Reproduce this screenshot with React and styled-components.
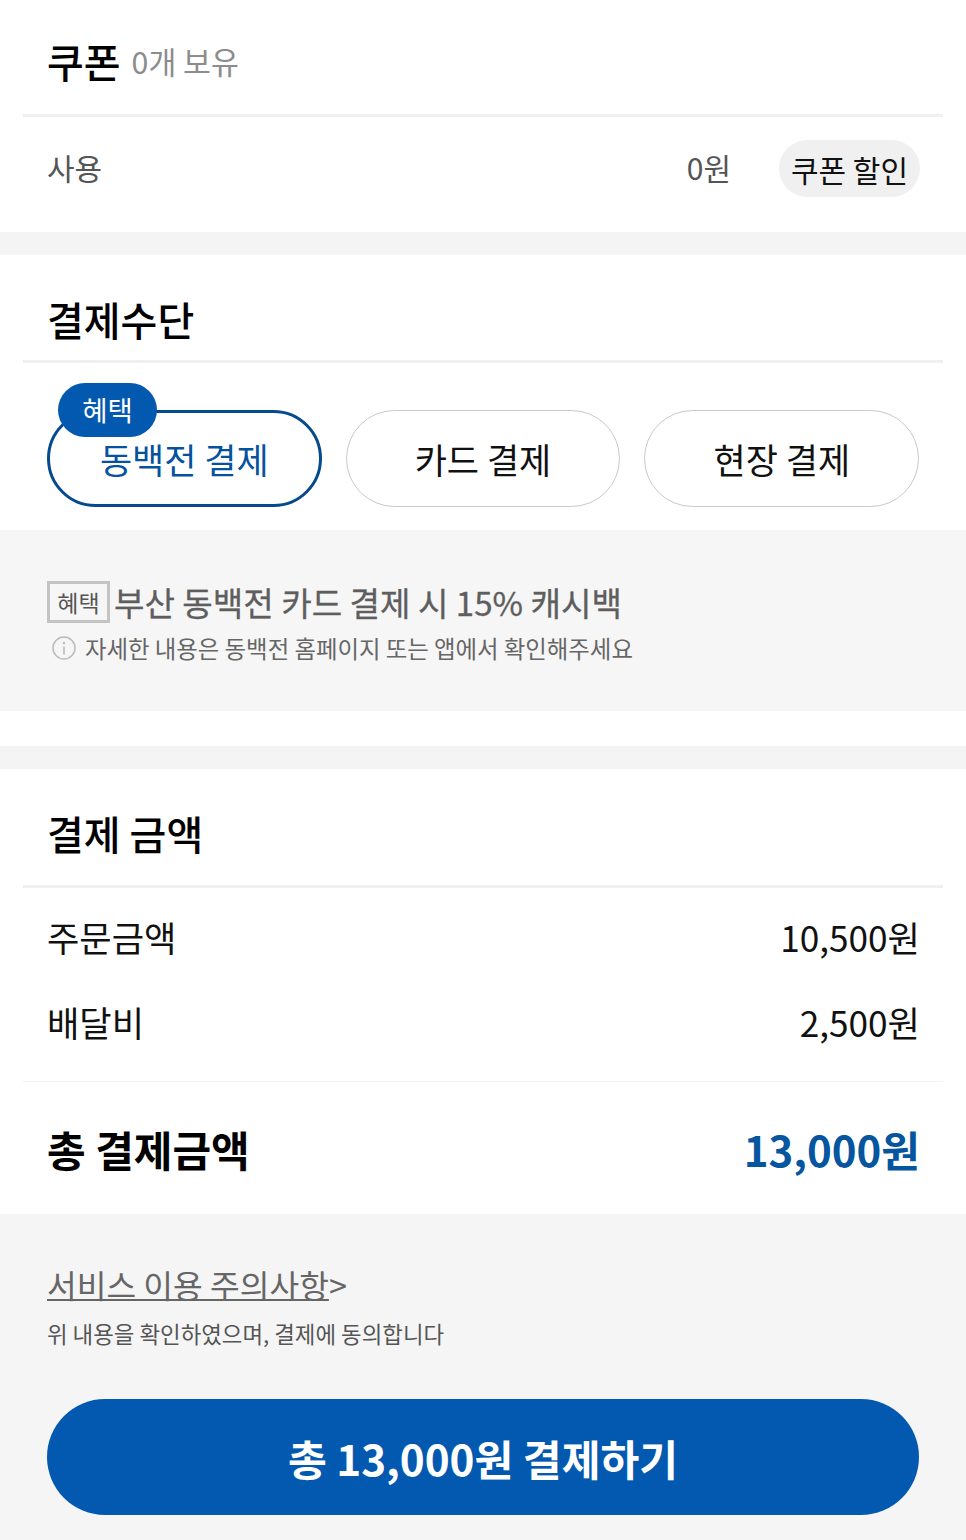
import React from "react";
import styled, { createGlobalStyle } from "styled-components";

const Global = createGlobalStyle`
  html, body { margin: 0; padding: 0; background: #fff; }
  body { font-family: "Noto Sans CJK KR", "Noto Sans", sans-serif; color: #000; }
  * { box-sizing: border-box; }
`;
const Page = styled.div`width: 966px; height: 1540px; overflow: hidden; background: #fff; display: flex; flex-direction: column;`;
const Band = styled.div`height: ${p => p.$h}px; background: ${p => p.$bg || "#f4f4f4"}; flex: none;`;
const Section = styled.section`background: #fff; flex: none; padding: 0 23px;`;
const Head = styled.div`height: ${p => p.$h}px; padding: ${p => p.$pt}px 24px 0; display: flex; align-items: center; gap: 11px; border-bottom: 3px solid #f0f0f0;`;
const Title = styled.h2`margin: 0; font-size: 40px; line-height: 1; font-weight: 500; color: #000;`;
const Owned = styled.span`font-size: 30.3px; line-height: 1; color: #8c8c8c;`;
const CouponRow = styled.div`height: 115px; padding: 0 23px 12px 24px; display: flex; align-items: center;`;
const Muted = styled.span`font-size: 30px; line-height: 1; color: #555; margin-bottom: 3px;`;
const Amount = styled(Muted)`margin-left: auto; margin-right: 48px;`;
const Chip = styled.button`width: 141px; height: 57px; border: 0; border-radius: 29px; background: #f0f0f0; font: inherit; font-size: 30px; color: #111; padding: 0; white-space: nowrap;`;
const Methods = styled.div`height: 167px; padding: 47px 24px 0; display: grid; grid-template-columns: 274.67px 274.67px 275px; column-gap: 24px;`;
const Method = styled.button`position: relative; height: 97px; border-radius: 49px; background: #fff; font: inherit; font-size: 35px; padding: 0; border: ${p => p.$active ? "3px solid #054a8c" : "1px solid #c9c9c9"}; color: ${p => p.$active ? "#05529f" : "#111"}; white-space: nowrap;`;
const Badge = styled.span`position: absolute; left: 8px; top: -30px; width: 99px; height: 54px; border-radius: 27px; background: #0359b0; color: #fff; font-size: 27.5px; line-height: 52px; text-align: center;`;
const Note = styled.div`height: 181px; background: #f6f6f6; padding: 50px 47px 0; flex: none;`;
const NoteLine = styled.div`display: flex; align-items: center; height: 44px; gap: 4px;`;
const Tag = styled.span`width: 63px; height: 42px; border: 3px solid #c4c4c4; color: #555; font-size: 23px; display: flex; align-items: center; justify-content: center; white-space: nowrap;`;
const NoteTitle = styled.span`font-size: 33.13px; font-weight: 400; color: #5e5e5e; white-space: nowrap; -webkit-text-stroke: 0.3px #5e5e5e;`;
const NoteSub = styled.div`display: flex; align-items: center; gap: 9px; padding: 1px 0 0 5px; height: 46px; font-size: 23.4px; color: #666; white-space: nowrap;`;
const Rows = styled.div`padding: 6px 25px 0 24px; height: 194px; border-bottom: 1px solid #f2f2f2;`;
const Row = styled.div`height: 85px; display: flex; align-items: center; justify-content: space-between; font-size: 35.2px; color: #111; margin-right: -2px;`;
const Total = styled.div`height: 132px; padding: 0 23px 0 24px; display: flex; align-items: center; justify-content: space-between;`;
const TotalLabel = styled.span`font-size: 42px; font-weight: 700; color: #000;`;
const TotalValue = styled.span`font-size: 42px; font-weight: 700; color: #05569f;`;
const Footer = styled.footer`flex: 1; background: #f5f5f5; padding: 47px 47px 0; display: flex; flex-direction: column;`;
const Notice = styled.a`font-size: 32.3px; line-height: 46px; color: #666; white-space: nowrap;`;
const Under = styled.span`text-decoration: underline; text-decoration-thickness: 2px;`;
const Agree = styled.p`margin: 6px 0 0; font-size: 22.4px; line-height: 40px; color: #555; white-space: nowrap;`;
const Pay = styled.button`margin-top: 46px; width: 872px; height: 116px; border: 0; border-radius: 58px; background: #0359b0; color: #fff; font: inherit; font-size: 42.2px; font-weight: 700; padding: 0;`;

const Info = () => (
  <svg width="24" height="24" viewBox="0 0 24 24" fill="none">
    <circle cx="12" cy="12" r="11" stroke="#bbb" strokeWidth="1.5" />
    <circle cx="12" cy="7" r="1.2" fill="#bbb" />
    <path d="M12 10.5v8" stroke="#bbb" strokeWidth="1.6" />
  </svg>
);

export default function App() {
  return (
    <Page>
      <Global />
      <Section>
        <Head $h={117} $pt={8}>
          <Title>쿠폰</Title>
          <Owned>0개 보유</Owned>
        </Head>
        <CouponRow>
          <Muted>사용</Muted>
          <Amount>0원</Amount>
          <Chip>쿠폰 할인</Chip>
        </CouponRow>
      </Section>
      <Band $h={23} />
      <Section>
        <Head $h={108} $pt={23}><Title>결제수단</Title></Head>
        <Methods>
          <Method $active><Badge>혜택</Badge>동백전 결제</Method>
          <Method>카드 결제</Method>
          <Method>현장 결제</Method>
        </Methods>
      </Section>
      <Note>
        <NoteLine><Tag>혜택</Tag><NoteTitle>부산 동백전 카드 결제 시 15% 캐시백</NoteTitle></NoteLine>
        <NoteSub><Info />자세한 내용은 동백전 홈페이지 또는 앱에서 확인해주세요</NoteSub>
      </Note>
      <Band $h={35} $bg="#fff" />
      <Band $h={23} />
      <Section>
        <Head $h={119} $pt={11}><Title>결제 금액</Title></Head>
        <Rows>
          <Row><span>주문금액</span><span>10,500원</span></Row>
          <Row><span>배달비</span><span>2,500원</span></Row>
        </Rows>
        <Total><TotalLabel>총 결제금액</TotalLabel><TotalValue>13,000원</TotalValue></Total>
      </Section>
      <Footer>
        <Notice><Under>서비스 이용 주의사항</Under>&gt;</Notice>
        <Agree>위 내용을 확인하였으며, 결제에 동의합니다</Agree>
        <Pay>총 13,000원 결제하기</Pay>
      </Footer>
    </Page>
  );
}
